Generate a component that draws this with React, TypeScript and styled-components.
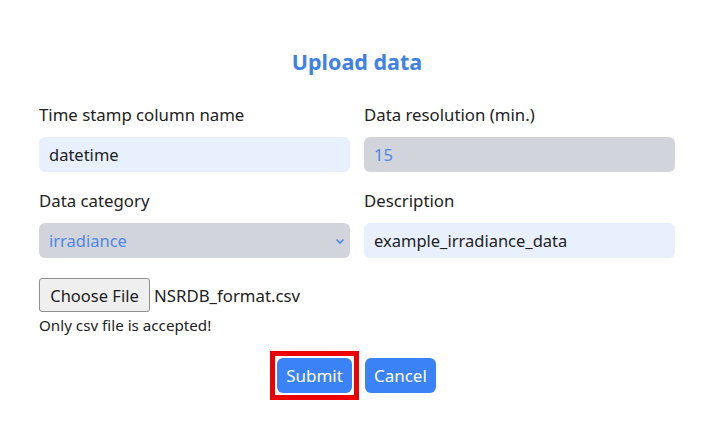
import React from "react";
import styled, { createGlobalStyle } from "styled-components";

const Global = createGlobalStyle`
  body { margin: 0; background: #fff; font-family: "Noto Sans", "Open Sans", sans-serif; color: #222; }
`;

const Page = styled.div`
  width: 636px;
  padding: 44px 0 0 39px;
`;

const Title = styled.h2`
  margin: 0 0 24px;
  text-align: center;
  font-size: 21.5px;
  font-weight: 700;
  color: #3f82e6;
  line-height: 36px;
`;

const Grid = styled.div`
  display: grid;
  grid-template-columns: 311px 311px;
  column-gap: 14px;
  row-gap: 18px;
`;

const Field = styled.div`
  display: flex;
  flex-direction: column;
  gap: 11px;
`;

const Label = styled.label`
  font-size: 16.8px;
  line-height: 22px;
  color: #222;
`;

const Input = styled.div<{ $disabled?: boolean; $select?: boolean }>`
  height: 35px;
  box-sizing: border-box;
  border-radius: 6px;
  padding: 0 ${(p) => (p.$select ? "5px" : "10px")} 0 10px;
  display: flex;
  align-items: center;
  justify-content: space-between;
  font-size: 16.5px;
  background: ${(p) => (p.$disabled ? "#d1d5db" : "#e8f0fe")};
  color: ${(p) => (p.$disabled ? "#4f86e8" : "#222")};
`;

const FileRow = styled.div`
  margin-top: 20px;
  display: flex;
  align-items: center;
  gap: 4px;
  font-size: 16.8px;
`;

const FileButton = styled.button`
  height: 34px;
  width: 111px;
  box-sizing: border-box;
  border: 1px solid #8f8f8f;
  border-radius: 3px;
  background: #efefef;
  font-family: inherit;
  font-size: 16.5px;
  color: #222;
  padding: 0 8px;
`;

const Hint = styled.div`
  font-size: 15.2px;
  line-height: 20px;
  margin-top: 3px;
`;

const Actions = styled.div`
  display: flex;
  justify-content: center;
  align-items: center;
  gap: 6px;
  margin-top: 16px;
  padding-right: 8px;
`;

const Highlight = styled.div`
  border: 5px solid #ee0000;
  padding: 2px;
`;

const Btn = styled.button`
  height: 35px;
  border: none;
  border-radius: 6px;
  background: #3b82f6;
  color: #fff;
  font-family: inherit;
  font-size: 17px;
  padding: 0 9px;
  display: block;
`;

export default function App() {
  return (
    <>
      <Global />
      <Page>
        <Title>Upload data</Title>
        <Grid>
          <Field>
            <Label>Time stamp column name</Label>
            <Input>datetime</Input>
          </Field>
          <Field>
            <Label>Data resolution (min.)</Label>
            <Input $disabled>15</Input>
          </Field>
          <Field>
            <Label>Data category</Label>
            <Input $disabled $select>
              irradiance
              <svg width="10" height="8" viewBox="0 0 10 8">
                <path d="M1.5 2.5 L5 6 L8.5 2.5" fill="none" stroke="#4f86e8" strokeWidth="1.6" />
              </svg>
            </Input>
          </Field>
          <Field>
            <Label>Description</Label>
            <Input>example_irradiance_data</Input>
          </Field>
        </Grid>
        <FileRow>
          <FileButton>Choose File</FileButton>
          <span>NSRDB_format.csv</span>
        </FileRow>
        <Hint>Only csv file is accepted!</Hint>
        <Actions>
          <Highlight>
            <Btn>Submit</Btn>
          </Highlight>
          <Btn>Cancel</Btn>
        </Actions>
      </Page>
    </>
  );
}
